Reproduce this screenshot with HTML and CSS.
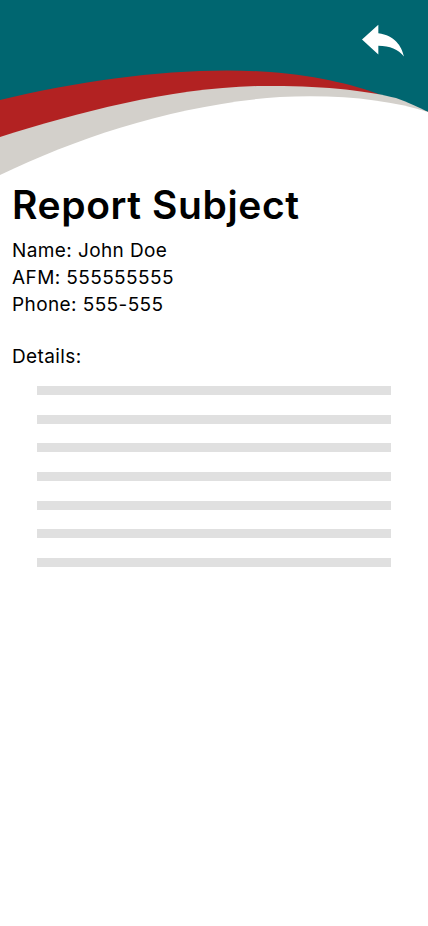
FILE: index.html
```html
<!DOCTYPE html>
<html lang="en">
<head>
<meta charset="utf-8">
<title>Report Subject</title>
<link rel="stylesheet" href="styles.css">
</head>
<body>
<div class="screen">
  <header class="header">
    <svg class="wave" width="428" height="182" viewBox="0 0 428 182" xmlns="http://www.w3.org/2000/svg">
      <rect x="0" y="0" width="428" height="182" fill="#006670"/>
      <path d="M0,100 C90,78 190,66 270,72 C320,76 360,86 386,97 C402,102 416,107 428,112 L428,182 L0,182 Z" fill="#B22222"/>
      <path d="M0,137 C80,112 170,88 260,86 C320,85 370,91 396,98 C408,102 418,107 428,112 L428,182 L0,182 Z" fill="#D3D0CB"/>
      <path d="M0,175 C80,136 180,104 280,97 C340,94 390,100 428,112 L428,182 L0,182 Z" fill="#FFFFFF"/>
    </svg>
    <button class="back" aria-label="Back">
      <svg width="56" height="51" viewBox="0 0 24 24" preserveAspectRatio="none" xmlns="http://www.w3.org/2000/svg">
        <path d="M10 9V5l-7 7 7 7v-4.1c5 0 8.5 1.6 11 5.1-1-5-4-10-11-11z" fill="#FFFFFF"/>
      </svg>
    </button>
  </header>
  <main class="content">
    <h1 class="title">Report Subject</h1>
    <div class="info">
      <p>Name: John Doe</p>
      <p>AFM: 555555555</p>
      <p>Phone: 555-555</p>
    </div>
    <p class="details-label">Details:</p>
    <div class="lines">
      <div class="line"></div>
      <div class="line"></div>
      <div class="line"></div>
      <div class="line"></div>
      <div class="line"></div>
      <div class="line"></div>
      <div class="line"></div>
    </div>
  </main>
</div>
</body>
</html>
```

FILE: styles.css
```css
* {
  box-sizing: border-box;
}

html, body {
  margin: 0;
  padding: 0;
  background: #ffffff;
}

body {
  font-family: Inter, "Noto Sans", "Liberation Sans", sans-serif;
  color: #000000;
}

.screen {
  width: 428px;
  min-height: 926px;
  background: #ffffff;
}

.header {
  position: relative;
  height: 182px;
}

.wave {
  display: block;
}

.back {
  position: absolute;
  top: 14px;
  left: 355px;
  width: 56px;
  height: 51px;
  padding: 0;
  border: 0;
  background: transparent;
  cursor: pointer;
}

.back svg {
  display: block;
}

.content {
  padding: 0 12px;
}

.title {
  margin: 0;
  font-size: 39px;
  font-weight: 600;
  line-height: 46px;
  letter-spacing: 0.6px;
}

.info {
  margin-top: 9px;
}

.info p,
.details-label {
  margin: 0;
  font-size: 19px;
  line-height: 27px;
  letter-spacing: 0.4px;
}

.details-label {
  margin-top: 25px;
}

.lines {
  display: flex;
  flex-direction: column;
  gap: 19.7px;
  margin-top: 16px;
  padding: 0 25px;
}

.line {
  height: 9px;
  background: #E0E0E0;
}
```
